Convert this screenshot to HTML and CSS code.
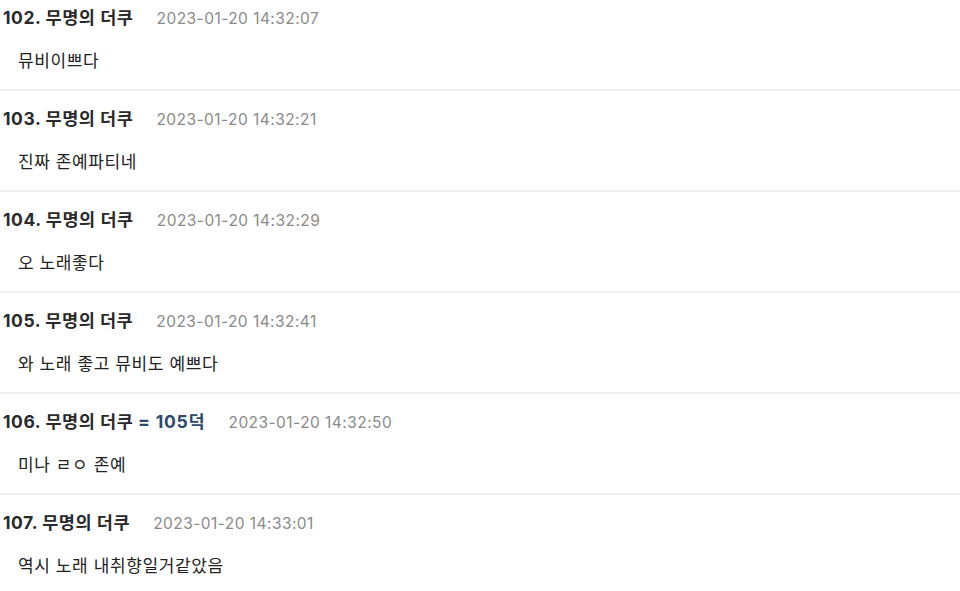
FILE: index.html
```html
<!DOCTYPE html>
<html lang="ko">
<head>
<meta charset="utf-8">
<link rel="stylesheet" href="styles.css">
</head>
<body>
<div class="list">
  <div class="item">
    <div class="head"><span class="name">102. 무명의 더쿠</span><span class="date">2023-01-20 14:32:07</span></div>
    <div class="body">뮤비이쁘다</div>
  </div>
  <div class="item">
    <div class="head"><span class="name">103. 무명의 더쿠</span><span class="date">2023-01-20 14:32:21</span></div>
    <div class="body">진짜 존예파티네</div>
  </div>
  <div class="item">
    <div class="head"><span class="name">104. 무명의 더쿠</span><span class="date">2023-01-20 14:32:29</span></div>
    <div class="body">오 노래좋다</div>
  </div>
  <div class="item">
    <div class="head"><span class="name">105. 무명의 더쿠</span><span class="date">2023-01-20 14:32:41</span></div>
    <div class="body">와 노래 좋고 뮤비도 예쁘다</div>
  </div>
  <div class="item">
    <div class="head"><span class="name">106. 무명의 더쿠 <span class="ref">= 105덕</span></span><span class="date">2023-01-20 14:32:50</span></div>
    <div class="body">미나 ㄹㅇ 존예</div>
  </div>
  <div class="item">
    <div class="head"><span class="name">107. 무명의 더쿠</span><span class="date">2023-01-20 14:33:01</span></div>
    <div class="body">역시 노래 내취향일거같았음</div>
  </div>
</div>
</body>
</html>
```
FILE: styles.css
```css
html, body {
  margin: 0;
  padding: 0;
  background: #fff;
}
body {
  font-family: Inter, "Noto Sans CJK KR", sans-serif;
  color: #222;
  overflow: hidden;
}
.list {
  margin-top: -10px;
}
.item {
  padding: 10px 0;
  border-bottom: 2px solid #efefef;
}
.head {
  display: flex;
  align-items: baseline;
  height: 36px;
  line-height: 36px;
  padding-left: 3px;
  white-space: nowrap;
}
.name {
  font-size: 17.5px;
  letter-spacing: 0.55px;
  font-weight: 700;
  color: #2a2a2a;
}
.ref {
  letter-spacing: 0.8px;
  color: #2c4a6d;
}
.date {
  margin-left: 23px;
  font-size: 15.5px;
  letter-spacing: 0.45px;
  color: #8a8a8a;
}
.body {
  margin-top: 7px;
  height: 36px;
  line-height: 36px;
  padding-left: 18px;
  font-size: 17px;
  letter-spacing: 0.6px;
  color: #222;
}
```
